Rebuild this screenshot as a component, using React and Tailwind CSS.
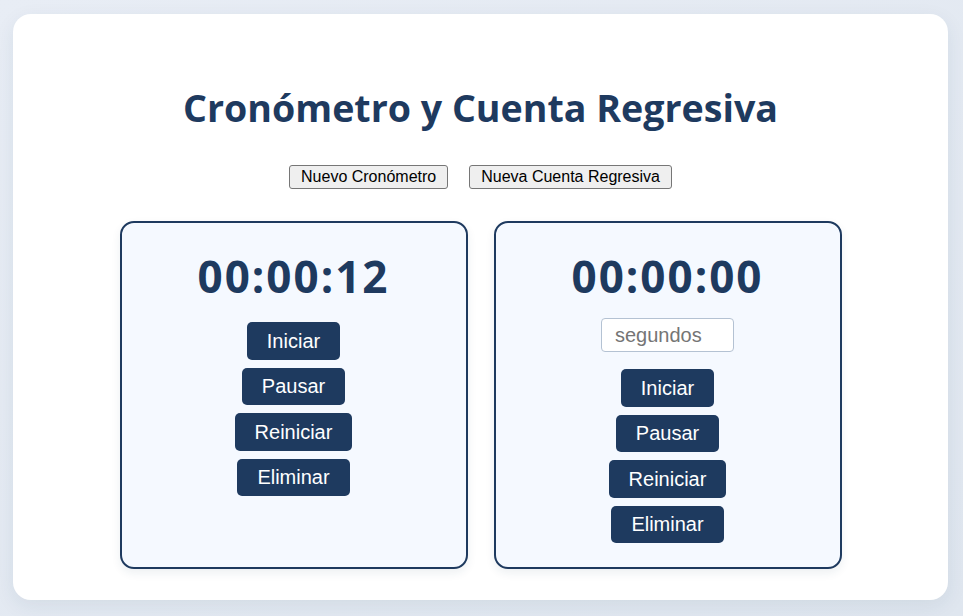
import React, { useState } from 'react';

const display = { fontFamily: '"Open Sans", "Noto Sans", sans-serif' };
const arial = { fontFamily: '"Liberation Sans", Arial, sans-serif' };

function ActionButton({ children }) {
    return (
        <button
            className="h-[37.5px] px-5 rounded-[5px] bg-[#1e3a5f] text-white text-[20px] leading-none"
            style={arial}
        >
            {children}
        </button>
    );
}

function TimerCard({ time, countdown }) {
    const [seconds, setSeconds] = useState('');

    return (
        <div className="w-[348px] flex flex-col items-center pt-[29px] pb-6 border-2 border-[#1e3a5f] rounded-[14px] bg-[#f5f9ff] shadow-[0_4px_10px_rgba(30,58,95,0.08)]">
            <div className="text-[44px] leading-[48px] font-bold tracking-[2px] text-[#1e3a5f] mb-[18px]" style={display}>
                {time}
            </div>
            {countdown && (
                <input
                    type="number"
                    value={seconds}
                    onChange={(e) => setSeconds(e.target.value)}
                    placeholder="segundos"
                    className="w-[133px] h-[34px] px-[13px] mb-[17px] bg-white border border-[#b4c2d3] rounded-[4px] text-[20px] text-black placeholder:text-[#757575] outline-none"
                    style={arial}
                />
            )}
            <div className={`flex flex-col items-center gap-2 ${countdown ? '' : 'mt-1'}`}>
                <ActionButton>Iniciar</ActionButton>
                <ActionButton>Pausar</ActionButton>
                <ActionButton>Reiniciar</ActionButton>
                <ActionButton>Eliminar</ActionButton>
            </div>
        </div>
    );
}

export default function App() {
    return (
        <div className="min-h-screen bg-gradient-to-br from-[#e8edf5] to-[#dfe6ef] pt-[14px] pl-[13px] pr-[15px] pb-[17px]">
            <div className="bg-white rounded-[18px] shadow-[0_6px_20px_rgba(30,58,95,0.08)] pt-[71px] pb-[31px] flex flex-col items-center">
                <h1 className="text-[37.6px] leading-[46px] font-bold text-[#1e3a5f]" style={display}>
                    Cronómetro y Cuenta Regresiva
                </h1>

                {/* Controles para crear */}
                <div className="flex gap-[21px] mt-[34px] mb-8">
                    <button
                        className="h-6 px-[11px] border border-[#767676] rounded-[3px] bg-[#efefef] text-[16px] text-black leading-none"
                        style={arial}
                    >
                        Nuevo Cronómetro
                    </button>
                    <button
                        className="h-6 px-[11px] border border-[#767676] rounded-[3px] bg-[#efefef] text-[16px] text-black leading-none"
                        style={arial}
                    >
                        Nueva Cuenta Regresiva
                    </button>
                </div>

                <div className="flex gap-[26px] items-stretch">
                    <TimerCard time="00:00:12" />
                    <TimerCard time="00:00:00" countdown />
                </div>
            </div>
        </div>
    );
}
